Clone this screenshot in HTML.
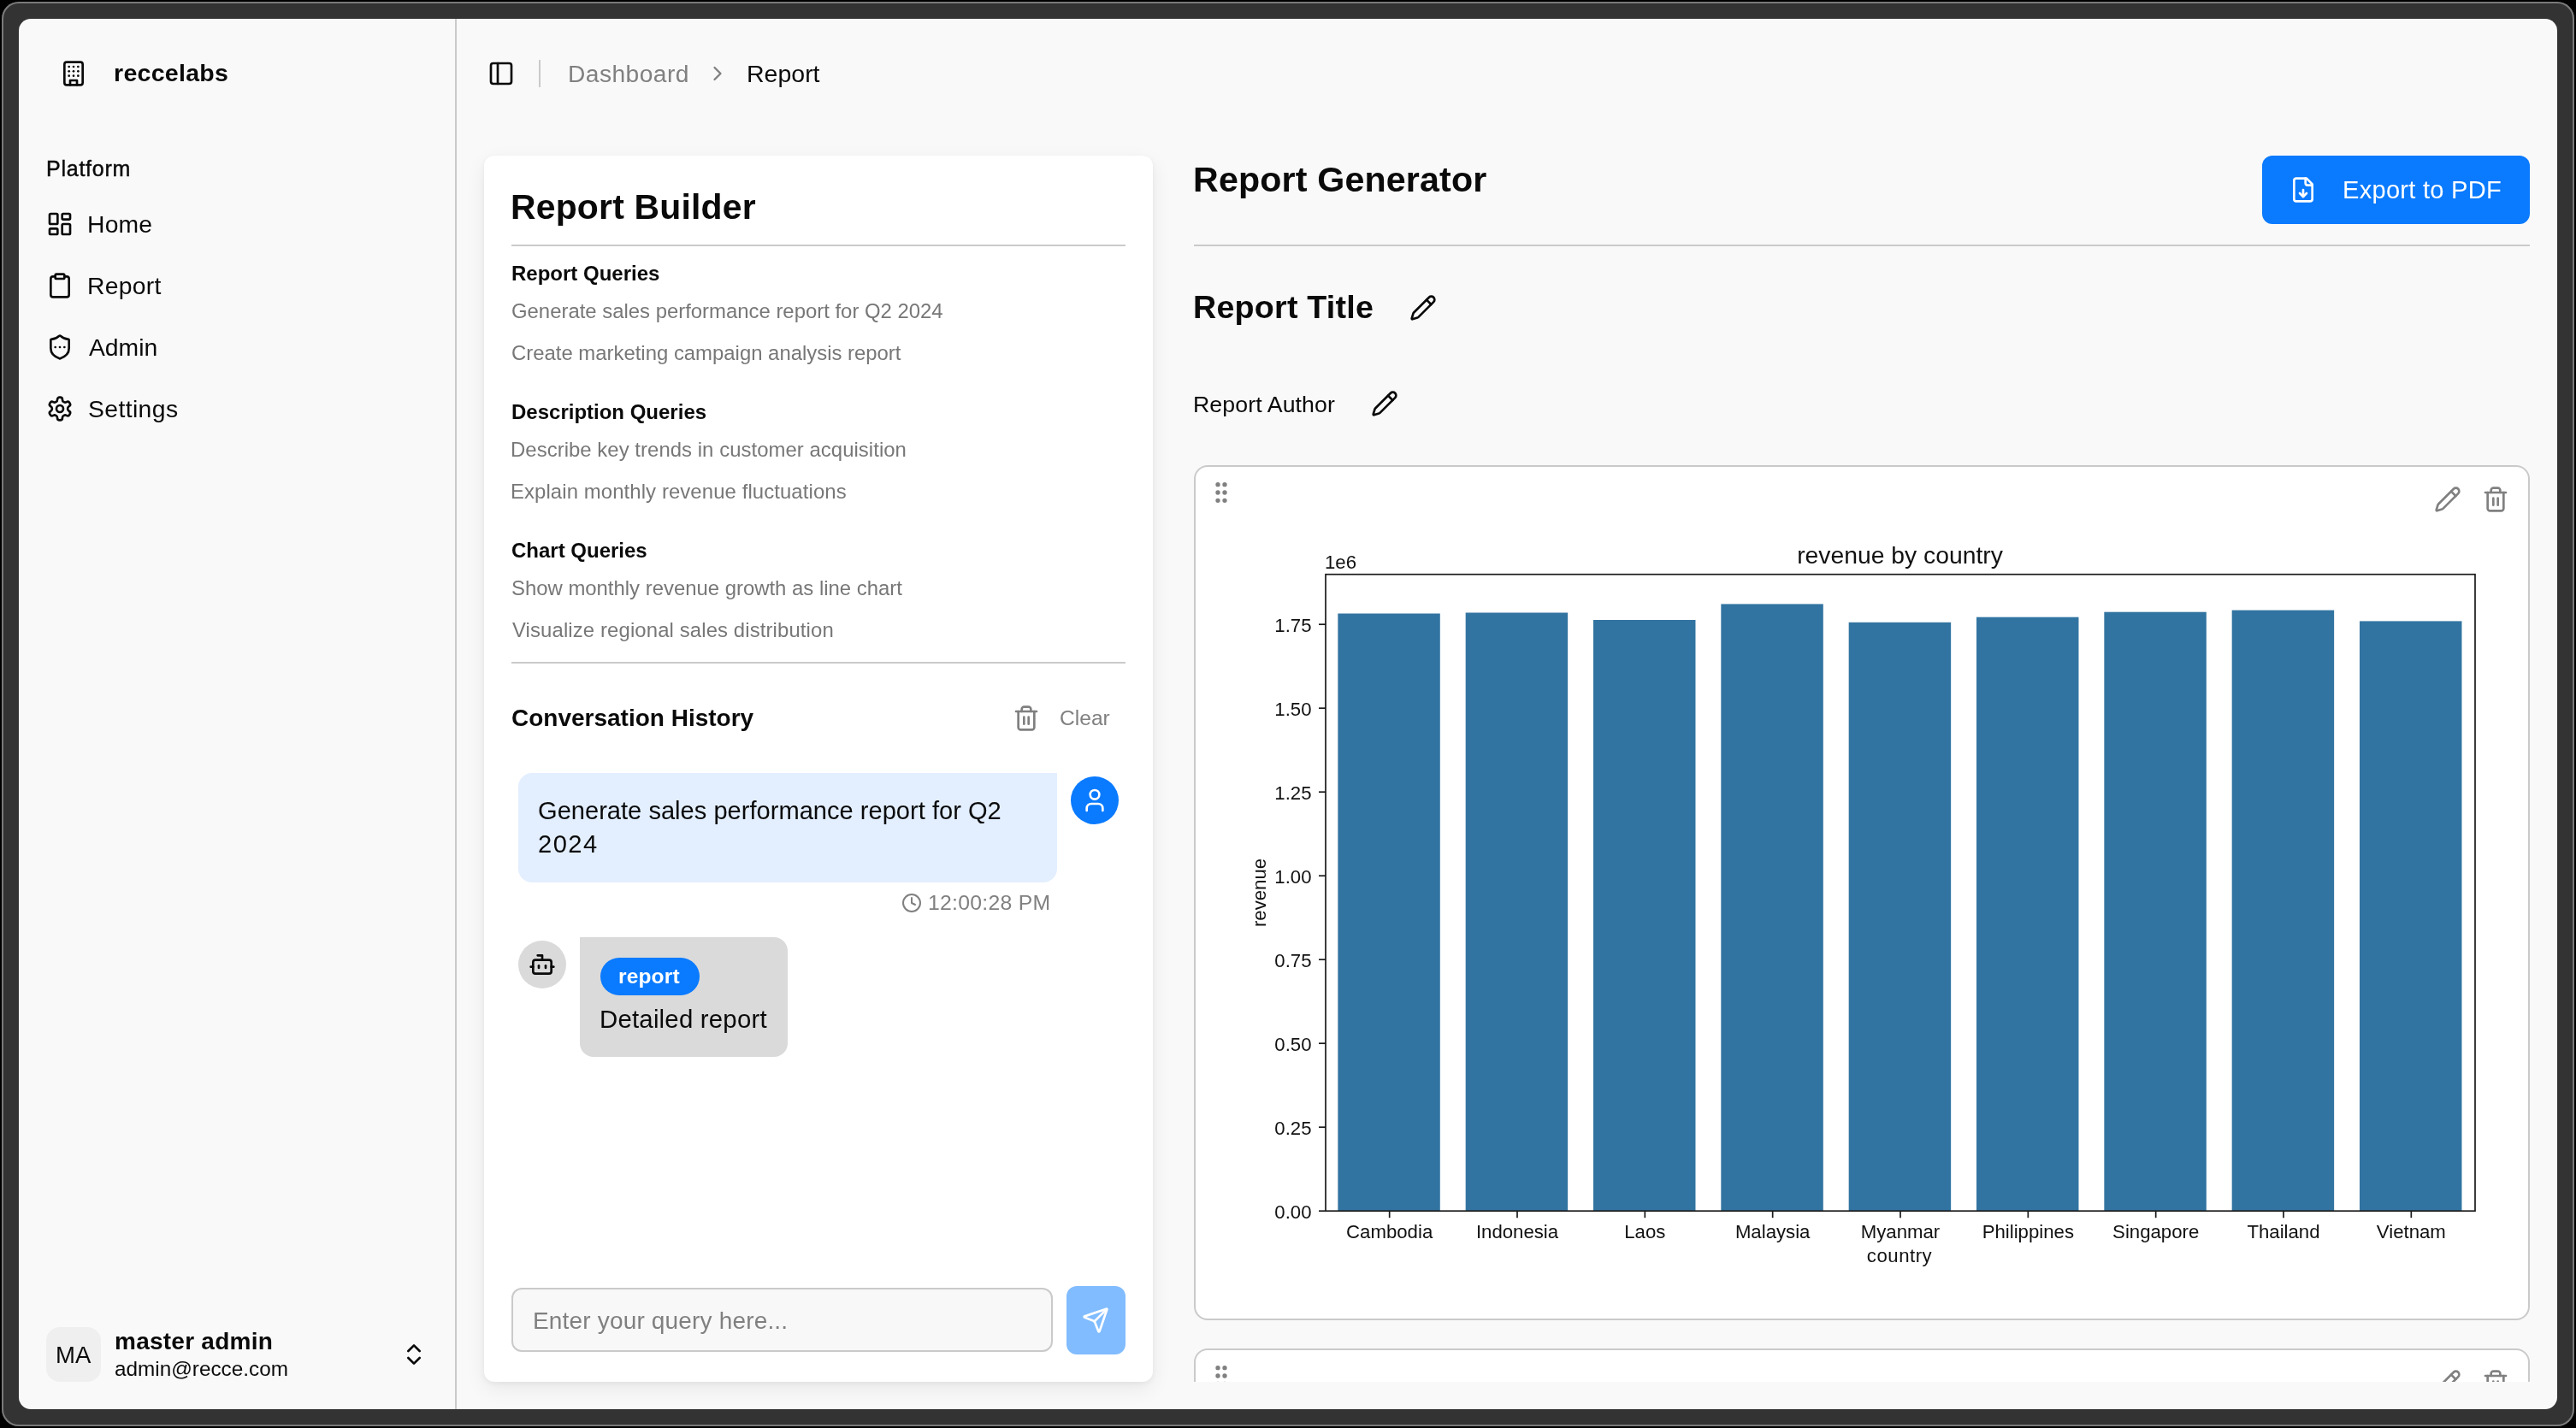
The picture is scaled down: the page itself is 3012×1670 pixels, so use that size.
<!DOCTYPE html>
<html><head><meta charset="utf-8"><title>Report</title>
<style>
html,body{margin:0;padding:0;}
body{width:3012px;height:1670px;overflow:hidden;background:#000;position:relative;font-family:"Liberation Sans",sans-serif;}
.t{position:absolute;white-space:nowrap;will-change:transform;}
.b{position:absolute;}
.ic{position:absolute;overflow:visible;}
#frame{position:absolute;left:2px;top:2px;width:3008px;height:1666px;border-radius:20px;background:#333;box-shadow:inset 0 0 0 2px #7a7a7a;}
#content{position:absolute;left:22px;top:22px;width:2968px;height:1626px;border-radius:14px;background:#f9f9f9;overflow:hidden;}
</style></head><body>
<div id="frame"></div>
<div id="content"></div>
<div class="b" style="left:532px;top:22px;width:2px;height:1626px;background:#cacaca"></div>
<svg class="ic" style="left:70px;top:70px;width:32px;height:32px" viewBox="0 0 24 24" fill="none" stroke="#0a0a0a" stroke-width="2" stroke-linecap="round" stroke-linejoin="round"><rect width="16" height="20" x="4" y="2" rx="2" ry="2"/><path d="M9 22v-4h6v4"/><path d="M8 6h.01"/><path d="M16 6h.01"/><path d="M12 6h.01"/><path d="M12 10h.01"/><path d="M12 14h.01"/><path d="M16 10h.01"/><path d="M16 14h.01"/><path d="M8 10h.01"/><path d="M8 14h.01"/></svg>
<div class="t" style="left:133.0px;top:71.37px;font-size:28.5px;line-height:28.5px;font-weight:700;color:#0a0a0a;letter-spacing:0.3px;">reccelabs</div>
<div class="t" style="left:54.0px;top:185.03px;font-size:25px;line-height:25px;font-weight:500;color:#0a0a0a;letter-spacing:0.75px;-webkit-text-stroke:0.45px #0a0a0a;">Platform</div>
<svg class="ic" style="left:54px;top:246px;width:32px;height:32px" viewBox="0 0 24 24" fill="none" stroke="#0a0a0a" stroke-width="2" stroke-linecap="round" stroke-linejoin="round"><rect width="7" height="9" x="3" y="3" rx="1"/><rect width="7" height="5" x="14" y="3" rx="1"/><rect width="7" height="9" x="14" y="12" rx="1"/><rect width="7" height="5" x="3" y="16" rx="1"/></svg>
<div class="t" style="left:102.0px;top:248.04px;font-size:28.3px;line-height:28.3px;font-weight:400;color:#0a0a0a;letter-spacing:0.2px;">Home</div>
<svg class="ic" style="left:54px;top:318px;width:32px;height:32px" viewBox="0 0 24 24" fill="none" stroke="#0a0a0a" stroke-width="2" stroke-linecap="round" stroke-linejoin="round"><rect width="8" height="4" x="8" y="2" rx="1" ry="1"/><path d="M16 4h2a2 2 0 0 1 2 2v14a2 2 0 0 1-2 2H6a2 2 0 0 1-2-2V6a2 2 0 0 1 2-2h2"/></svg>
<div class="t" style="left:102.0px;top:320.04px;font-size:28.3px;line-height:28.3px;font-weight:400;color:#0a0a0a;letter-spacing:0.3px;">Report</div>
<svg class="ic" style="left:54px;top:390px;width:32px;height:32px" viewBox="0 0 24 24" fill="none" stroke="#0a0a0a" stroke-width="2" stroke-linecap="round" stroke-linejoin="round"><path d="M20 13c0 5-3.5 7.5-7.66 8.95a1 1 0 0 1-.67-.01C7.5 20.5 4 18 4 13V6a1 1 0 0 1 1-1c2 0 4.5-1.2 6.24-2.72a1.17 1.17 0 0 1 1.52 0C14.51 3.81 17 5 19 5a1 1 0 0 1 1 1z"/><path d="M8 12h.01"/><path d="M12 12h.01"/><path d="M16 12h.01"/></svg>
<div class="t" style="left:103.5px;top:392.04px;font-size:28.3px;line-height:28.3px;font-weight:400;color:#0a0a0a;letter-spacing:0px;">Admin</div>
<svg class="ic" style="left:54px;top:462px;width:32px;height:32px" viewBox="0 0 24 24" fill="none" stroke="#0a0a0a" stroke-width="2" stroke-linecap="round" stroke-linejoin="round"><path d="M12.22 2h-.44a2 2 0 0 0-2 2v.18a2 2 0 0 1-1 1.73l-.43.25a2 2 0 0 1-2 0l-.15-.08a2 2 0 0 0-2.73.73l-.22.38a2 2 0 0 0 .73 2.73l.15.1a2 2 0 0 1 1 1.72v.51a2 2 0 0 1-1 1.74l-.15.09a2 2 0 0 0-.73 2.73l.22.38a2 2 0 0 0 2.73.73l.15-.08a2 2 0 0 1 2 0l.43.25a2 2 0 0 1 1 1.73V20a2 2 0 0 0 2 2h.44a2 2 0 0 0 2-2v-.18a2 2 0 0 1 1-1.73l.43-.25a2 2 0 0 1 2 0l.15.08a2 2 0 0 0 2.73-.73l.22-.39a2 2 0 0 0-.73-2.73l-.15-.08a2 2 0 0 1-1-1.74v-.5a2 2 0 0 1 1-1.74l.15-.09a2 2 0 0 0 .73-2.73l-.22-.38a2 2 0 0 0-2.73-.73l-.15.08a2 2 0 0 1-2 0l-.43-.25a2 2 0 0 1-1-1.73V4a2 2 0 0 0-2-2z"/><circle cx="12" cy="12" r="3"/></svg>
<div class="t" style="left:102.5px;top:464.04px;font-size:28.3px;line-height:28.3px;font-weight:400;color:#0a0a0a;letter-spacing:0.4px;">Settings</div>
<div class="b" style="left:54px;top:1552px;width:64px;height:64px;background:#efefef;border-radius:16px"></div>
<div class="t" style="left:64.5px;top:1570.72px;font-size:27.5px;line-height:27.5px;font-weight:400;color:#0a0a0a;">MA</div>
<div class="t" style="left:133.5px;top:1554.59px;font-size:28px;line-height:28px;font-weight:700;color:#0a0a0a;letter-spacing:0.25px;">master admin</div>
<div class="t" style="left:134.0px;top:1589.03px;font-size:24.3px;line-height:24.3px;font-weight:400;color:#0a0a0a;">admin@recce.com</div>
<svg class="ic" style="left:468px;top:1568px;width:32px;height:32px" viewBox="0 0 24 24" fill="none" stroke="#0a0a0a" stroke-width="2" stroke-linecap="round" stroke-linejoin="round"><path d="m7 15 5 5 5-5"/><path d="m7 9 5-5 5 5"/></svg>
<svg class="ic" style="left:570px;top:70px;width:32px;height:32px" viewBox="0 0 24 24" fill="none" stroke="#0a0a0a" stroke-width="2" stroke-linecap="round" stroke-linejoin="round"><rect width="18" height="18" x="3" y="3" rx="2"/><path d="M9 3v18"/></svg>
<div class="b" style="left:629.5px;top:70px;width:2px;height:32px;background:#cacaca"></div>
<div class="t" style="left:663.5px;top:72.02px;font-size:28.2px;line-height:28.2px;font-weight:400;color:#808080;letter-spacing:0.45px;">Dashboard</div>
<svg class="ic" style="left:825px;top:72px;width:28px;height:28px" viewBox="0 0 24 24" fill="none" stroke="#808080" stroke-width="2" stroke-linecap="round" stroke-linejoin="round"><path d="m9 18 6-6-6-6"/></svg>
<div class="t" style="left:872.5px;top:71.77px;font-size:28.5px;line-height:28.5px;font-weight:400;color:#0a0a0a;">Report</div>
<div class="b" style="left:566px;top:182px;width:782px;height:1434px;background:#fff;border-radius:12px;box-shadow:0 8px 24px rgba(0,0,0,0.07),0 2px 6px rgba(0,0,0,0.05)"></div>
<div class="t" style="left:596.5px;top:221.87px;font-size:40.9px;line-height:40.9px;font-weight:700;color:#0a0a0a;letter-spacing:0.2px;">Report Builder</div>
<div class="b" style="left:598px;top:286px;width:718px;height:2px;background:#cacaca"></div>
<div class="t" style="left:597.5px;top:307.68px;font-size:24px;line-height:24px;font-weight:700;color:#0a0a0a;">Report Queries</div>
<div class="t" style="left:598.0px;top:351.56px;font-size:23.9px;line-height:23.9px;font-weight:400;color:#777777;">Generate sales performance report for Q2 2024</div>
<div class="t" style="left:598.0px;top:400.56px;font-size:23.9px;line-height:23.9px;font-weight:400;color:#777777;">Create marketing campaign analysis report</div>
<div class="t" style="left:597.5px;top:470.48px;font-size:24px;line-height:24px;font-weight:700;color:#0a0a0a;">Description Queries</div>
<div class="t" style="left:597.0px;top:513.66px;font-size:23.9px;line-height:23.9px;font-weight:400;color:#777777;letter-spacing:0.05px;">Describe key trends in customer acquisition</div>
<div class="t" style="left:597.0px;top:563.36px;font-size:23.9px;line-height:23.9px;font-weight:400;color:#777777;letter-spacing:0.1px;">Explain monthly revenue fluctuations</div>
<div class="t" style="left:597.5px;top:631.58px;font-size:24px;line-height:24px;font-weight:700;color:#0a0a0a;">Chart Queries</div>
<div class="t" style="left:598.0px;top:676.46px;font-size:23.9px;line-height:23.9px;font-weight:400;color:#777777;">Show monthly revenue growth as line chart</div>
<div class="t" style="left:598.5px;top:725.46px;font-size:23.9px;line-height:23.9px;font-weight:400;color:#777777;letter-spacing:0.12px;">Visualize regional sales distribution</div>
<div class="b" style="left:598px;top:774px;width:718px;height:2px;background:#cacaca"></div>
<div class="t" style="left:597.5px;top:826.29px;font-size:28px;line-height:28px;font-weight:700;color:#0a0a0a;">Conversation History</div>
<svg class="ic" style="left:1184px;top:824px;width:32px;height:32px" viewBox="0 0 24 24" fill="none" stroke="#808080" stroke-width="2" stroke-linecap="round" stroke-linejoin="round"><path d="M3 6h18"/><path d="M19 6v14c0 1-1 2-2 2H7c-1 0-2-1-2-2V6"/><path d="M8 6V4c0-1 1-2 2-2h4c1 0 2 1 2 2v2"/><line x1="10" x2="10" y1="11" y2="17"/><line x1="14" x2="14" y1="11" y2="17"/></svg>
<div class="t" style="left:1238.5px;top:828.37px;font-size:24.6px;line-height:24.6px;font-weight:400;color:#808080;">Clear</div>
<div class="b" style="left:606px;top:904px;width:630px;height:128px;background:#e3efff;border-radius:16px 0 16px 16px"></div>
<div class="t" style="left:628.5px;top:933.96px;font-size:29.1px;line-height:29.1px;font-weight:400;color:#0a0a0a;">Generate sales performance report for Q2</div>
<div class="t" style="left:628.5px;top:973.16px;font-size:29.1px;line-height:29.1px;font-weight:400;color:#0a0a0a;letter-spacing:1.5px;">2024</div>
<div class="b" style="left:1252px;top:908px;width:56px;height:56px;background:#0a7aff;border-radius:50%"></div>
<svg class="ic" style="left:1264px;top:920px;width:32px;height:32px" viewBox="0 0 24 24" fill="none" stroke="#ffffff" stroke-width="2" stroke-linecap="round" stroke-linejoin="round"><path d="M19 21v-2a4 4 0 0 0-4-4H9a4 4 0 0 0-4 4v2"/><circle cx="12" cy="7" r="4"/></svg>
<svg class="ic" style="left:1054px;top:1044px;width:24px;height:24px" viewBox="0 0 24 24" fill="none" stroke="#808080" stroke-width="2" stroke-linecap="round" stroke-linejoin="round"><circle cx="12" cy="12" r="10"/><polyline points="12 6 12 12 16 14"/></svg>
<div class="t" style="left:1084.5px;top:1044.30px;font-size:24.8px;line-height:24.8px;font-weight:400;color:#808080;letter-spacing:0.25px;">12:00:28 PM</div>
<div class="b" style="left:606px;top:1100px;width:56px;height:56px;background:#dadada;border-radius:50%"></div>
<svg class="ic" style="left:618px;top:1112px;width:32px;height:32px" viewBox="0 0 24 24" fill="none" stroke="#0a0a0a" stroke-width="2" stroke-linecap="round" stroke-linejoin="round"><path d="M12 8V4H8"/><rect width="16" height="12" x="4" y="8" rx="2"/><path d="M2 14h2"/><path d="M20 14h2"/><path d="M15 13v2"/><path d="M9 13v2"/></svg>
<div class="b" style="left:678px;top:1096px;width:243px;height:140px;background:#dadada;border-radius:0 16px 16px 16px"></div>
<div class="b" style="left:702px;top:1120px;width:116px;height:44px;background:#0a7aff;border-radius:22px"></div>
<div class="t" style="left:723.3px;top:1129.66px;font-size:24.5px;line-height:24.5px;font-weight:700;color:#ffffff;letter-spacing:0.15px;">report</div>
<div class="t" style="left:701.0px;top:1177.11px;font-size:29.4px;line-height:29.4px;font-weight:400;color:#0a0a0a;letter-spacing:0.2px;">Detailed report</div>
<div class="b" style="left:598px;top:1506px;width:633px;height:75px;background:#f8f8f8;border:2px solid #cacaca;border-radius:12px;box-sizing:border-box"></div>
<div class="t" style="left:623.0px;top:1530.79px;font-size:28px;line-height:28px;font-weight:400;color:#808080;letter-spacing:0.17px;">Enter your query here...</div>
<div class="b" style="left:1247px;top:1504px;width:69px;height:80px;background:#80bcff;border-radius:12px"></div>
<svg class="ic" style="left:1265px;top:1528px;width:32px;height:32px" viewBox="0 0 24 24" fill="none" stroke="#ffffff" stroke-width="2" stroke-linecap="round" stroke-linejoin="round"><path d="M14.536 21.686a.5.5 0 0 0 .937-.024l6.5-19a.496.496 0 0 0-.635-.635l-19 6.5a.5.5 0 0 0-.024.937l7.93 3.18a2 2 0 0 1 1.112 1.11z"/><path d="m21.854 2.147-10.94 10.939"/></svg>
<div class="t" style="left:1394.5px;top:190.12px;font-size:41.2px;line-height:41.2px;font-weight:700;color:#0a0a0a;letter-spacing:0.15px;">Report Generator</div>
<div class="b" style="left:2645px;top:182px;width:313px;height:80px;background:#0a7aff;border-radius:12px"></div>
<svg class="ic" style="left:2677px;top:206px;width:32px;height:32px" viewBox="0 0 24 24" fill="none" stroke="#ffffff" stroke-width="2" stroke-linecap="round" stroke-linejoin="round"><path d="M15 2H6a2 2 0 0 0-2 2v16a2 2 0 0 0 2 2h12a2 2 0 0 0 2-2V7Z"/><path d="M14 2v4a2 2 0 0 0 2 2h4"/><path d="M12 18v-6"/><path d="m9 15 3 3 3-3"/></svg>
<div class="t" style="left:2739.0px;top:208.36px;font-size:29.1px;line-height:29.1px;font-weight:400;color:#ffffff;letter-spacing:0.25px;">Export to PDF</div>
<div class="b" style="left:1396px;top:286px;width:1562px;height:2px;background:#cacaca"></div>
<div class="t" style="left:1394.5px;top:341.08px;font-size:37.7px;line-height:37.7px;font-weight:700;color:#0a0a0a;letter-spacing:0.2px;">Report Title</div>
<svg class="ic" style="left:1648px;top:344px;width:32px;height:32px" viewBox="0 0 24 24" fill="none" stroke="#0a0a0a" stroke-width="2" stroke-linecap="round" stroke-linejoin="round"><path d="M21.174 6.812a1 1 0 0 0-3.986-3.987L3.842 16.174a2 2 0 0 0-.5.83l-1.321 4.352a.5.5 0 0 0 .623.622l4.353-1.32a2 2 0 0 0 .83-.497z"/><path d="m15 5 4 4"/></svg>
<div class="t" style="left:1395.0px;top:460.09px;font-size:26.7px;line-height:26.7px;font-weight:400;color:#0a0a0a;letter-spacing:0.1px;">Report Author</div>
<svg class="ic" style="left:1603px;top:456px;width:32px;height:32px" viewBox="0 0 24 24" fill="none" stroke="#0a0a0a" stroke-width="2" stroke-linecap="round" stroke-linejoin="round"><path d="M21.174 6.812a1 1 0 0 0-3.986-3.987L3.842 16.174a2 2 0 0 0-.5.83l-1.321 4.352a.5.5 0 0 0 .623.622l4.353-1.32a2 2 0 0 0 .83-.497z"/><path d="m15 5 4 4"/></svg>
<div class="b" style="left:1396px;top:544px;width:1562px;height:1000px;background:#fff;border:2px solid #cacaca;border-radius:16px;box-sizing:border-box"></div>
<svg class="ic" style="left:1412px;top:560px;width:32px;height:32px" viewBox="0 0 24 24" fill="none" stroke="#808080" stroke-width="2" stroke-linecap="round" stroke-linejoin="round"><circle cx="9" cy="12" r="1"/><circle cx="9" cy="5" r="1"/><circle cx="9" cy="19" r="1"/><circle cx="15" cy="12" r="1"/><circle cx="15" cy="5" r="1"/><circle cx="15" cy="19" r="1"/></svg>
<svg class="ic" style="left:2846px;top:568px;width:32px;height:32px" viewBox="0 0 24 24" fill="none" stroke="#808080" stroke-width="2" stroke-linecap="round" stroke-linejoin="round"><path d="M21.174 6.812a1 1 0 0 0-3.986-3.987L3.842 16.174a2 2 0 0 0-.5.83l-1.321 4.352a.5.5 0 0 0 .623.622l4.353-1.32a2 2 0 0 0 .83-.497z"/><path d="m15 5 4 4"/></svg>
<svg class="ic" style="left:2902px;top:568px;width:32px;height:32px" viewBox="0 0 24 24" fill="none" stroke="#808080" stroke-width="2" stroke-linecap="round" stroke-linejoin="round"><path d="M3 6h18"/><path d="M19 6v14c0 1-1 2-2 2H7c-1 0-2-1-2-2V6"/><path d="M8 6V4c0-1 1-2 2-2h4c1 0 2 1 2 2v2"/><line x1="10" x2="10" y1="11" y2="17"/><line x1="14" x2="14" y1="11" y2="17"/></svg>
<div class="b" style="left:1396px;top:1577px;width:1562px;height:39px;overflow:hidden"><div class="b" style="left:0;top:0;width:1562px;height:400px;background:#fff;border:2px solid #cacaca;border-radius:16px;box-sizing:border-box"></div><svg class="ic" style="left:16px;top:16px;width:32px;height:32px" viewBox="0 0 24 24" fill="none" stroke="#808080" stroke-width="2" stroke-linecap="round" stroke-linejoin="round"><circle cx="9" cy="12" r="1"/><circle cx="9" cy="5" r="1"/><circle cx="9" cy="19" r="1"/><circle cx="15" cy="12" r="1"/><circle cx="15" cy="5" r="1"/><circle cx="15" cy="19" r="1"/></svg><svg class="ic" style="left:1450px;top:24px;width:32px;height:32px" viewBox="0 0 24 24" fill="none" stroke="#808080" stroke-width="2" stroke-linecap="round" stroke-linejoin="round"><path d="M21.174 6.812a1 1 0 0 0-3.986-3.987L3.842 16.174a2 2 0 0 0-.5.83l-1.321 4.352a.5.5 0 0 0 .623.622l4.353-1.32a2 2 0 0 0 .83-.497z"/><path d="m15 5 4 4"/></svg><svg class="ic" style="left:1506px;top:24px;width:32px;height:32px" viewBox="0 0 24 24" fill="none" stroke="#808080" stroke-width="2" stroke-linecap="round" stroke-linejoin="round"><path d="M3 6h18"/><path d="M19 6v14c0 1-1 2-2 2H7c-1 0-2-1-2-2V6"/><path d="M8 6V4c0-1 1-2 2-2h4c1 0 2 1 2 2v2"/><line x1="10" x2="10" y1="11" y2="17"/><line x1="14" x2="14" y1="11" y2="17"/></svg></div>
<svg class="ic" style="left:0;top:0;width:3012px;height:1670px;will-change:transform" viewBox="0 0 3012 1670" font-family="Liberation Sans, sans-serif" fill="#111"><rect x="1564.33" y="717.5" width="119.47" height="698.70" fill="#3274a1"/><line x1="1624.67" x2="1624.67" y1="1416.2" y2="1424.2" stroke="#1a1a1a" stroke-width="1.7"/><text x="1624.67" y="1447.7" text-anchor="middle" font-size="22.2">Cambodia</text><rect x="1713.67" y="716.5" width="119.47" height="699.70" fill="#3274a1"/><line x1="1774.00" x2="1774.00" y1="1416.2" y2="1424.2" stroke="#1a1a1a" stroke-width="1.7"/><text x="1774.00" y="1447.7" text-anchor="middle" font-size="22.2">Indonesia</text><rect x="1863.00" y="725.0" width="119.47" height="691.20" fill="#3274a1"/><line x1="1923.33" x2="1923.33" y1="1416.2" y2="1424.2" stroke="#1a1a1a" stroke-width="1.7"/><text x="1923.33" y="1447.7" text-anchor="middle" font-size="22.2">Laos</text><rect x="2012.33" y="706.4" width="119.47" height="709.80" fill="#3274a1"/><line x1="2072.67" x2="2072.67" y1="1416.2" y2="1424.2" stroke="#1a1a1a" stroke-width="1.7"/><text x="2072.67" y="1447.7" text-anchor="middle" font-size="22.2">Malaysia</text><rect x="2161.67" y="727.8" width="119.47" height="688.40" fill="#3274a1"/><line x1="2222.00" x2="2222.00" y1="1416.2" y2="1424.2" stroke="#1a1a1a" stroke-width="1.7"/><text x="2222.00" y="1447.7" text-anchor="middle" font-size="22.2">Myanmar</text><rect x="2311.00" y="721.7" width="119.47" height="694.50" fill="#3274a1"/><line x1="2371.33" x2="2371.33" y1="1416.2" y2="1424.2" stroke="#1a1a1a" stroke-width="1.7"/><text x="2371.33" y="1447.7" text-anchor="middle" font-size="22.2">Philippines</text><rect x="2460.33" y="715.7" width="119.47" height="700.50" fill="#3274a1"/><line x1="2520.67" x2="2520.67" y1="1416.2" y2="1424.2" stroke="#1a1a1a" stroke-width="1.7"/><text x="2520.67" y="1447.7" text-anchor="middle" font-size="22.2">Singapore</text><rect x="2609.67" y="713.6" width="119.47" height="702.60" fill="#3274a1"/><line x1="2670.00" x2="2670.00" y1="1416.2" y2="1424.2" stroke="#1a1a1a" stroke-width="1.7"/><text x="2670.00" y="1447.7" text-anchor="middle" font-size="22.2">Thailand</text><rect x="2759.00" y="726.4" width="119.47" height="689.80" fill="#3274a1"/><line x1="2819.33" x2="2819.33" y1="1416.2" y2="1424.2" stroke="#1a1a1a" stroke-width="1.7"/><text x="2819.33" y="1447.7" text-anchor="middle" font-size="22.2">Vietnam</text><line x1="1542.0" x2="1550.0" y1="1416.20" y2="1416.20" stroke="#1a1a1a" stroke-width="1.7"/><text x="1533.5" y="1424.80" text-anchor="end" font-size="22.2">0.00</text><line x1="1542.0" x2="1550.0" y1="1318.20" y2="1318.20" stroke="#1a1a1a" stroke-width="1.7"/><text x="1533.5" y="1326.80" text-anchor="end" font-size="22.2">0.25</text><line x1="1542.0" x2="1550.0" y1="1220.20" y2="1220.20" stroke="#1a1a1a" stroke-width="1.7"/><text x="1533.5" y="1228.80" text-anchor="end" font-size="22.2">0.50</text><line x1="1542.0" x2="1550.0" y1="1122.20" y2="1122.20" stroke="#1a1a1a" stroke-width="1.7"/><text x="1533.5" y="1130.80" text-anchor="end" font-size="22.2">0.75</text><line x1="1542.0" x2="1550.0" y1="1024.20" y2="1024.20" stroke="#1a1a1a" stroke-width="1.7"/><text x="1533.5" y="1032.80" text-anchor="end" font-size="22.2">1.00</text><line x1="1542.0" x2="1550.0" y1="926.20" y2="926.20" stroke="#1a1a1a" stroke-width="1.7"/><text x="1533.5" y="934.80" text-anchor="end" font-size="22.2">1.25</text><line x1="1542.0" x2="1550.0" y1="828.20" y2="828.20" stroke="#1a1a1a" stroke-width="1.7"/><text x="1533.5" y="836.80" text-anchor="end" font-size="22.2">1.50</text><line x1="1542.0" x2="1550.0" y1="730.20" y2="730.20" stroke="#1a1a1a" stroke-width="1.7"/><text x="1533.5" y="738.80" text-anchor="end" font-size="22.2">1.75</text><rect x="1550.0" y="671.7" width="1344.00" height="744.50" fill="none" stroke="#1a1a1a" stroke-width="1.7"/><text x="1549" y="665.2" font-size="22.2">1e6</text><text x="2221.5" y="659.2" text-anchor="middle" font-size="28.3">revenue by country</text><text x="2221" y="1476.4" text-anchor="middle" font-size="22.2" letter-spacing="0.5">country</text><text transform="translate(1480,1044.0) rotate(-90)" text-anchor="middle" font-size="22.2">revenue</text></svg>
</body></html>
